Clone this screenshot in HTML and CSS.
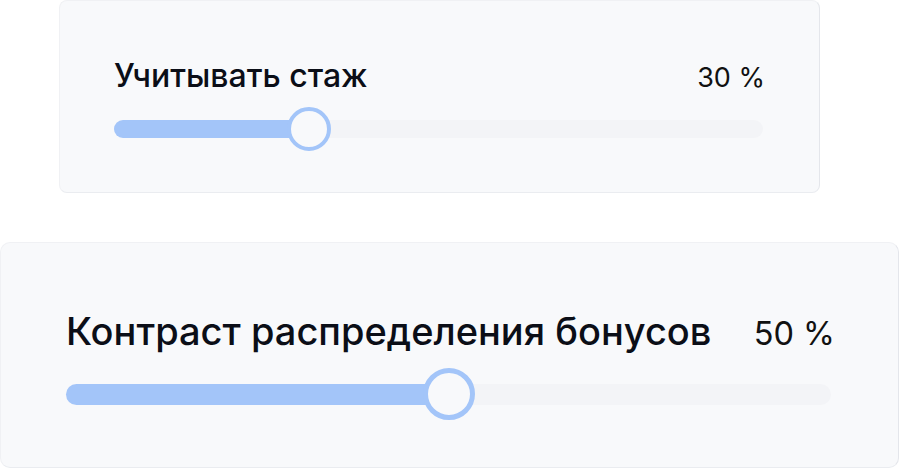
FILE: index.html
```html
<!DOCTYPE html>
<html lang="ru">
<head>
  <meta charset="UTF-8">
  <title>Настройки премий</title>
  <link rel="stylesheet" href="styles.css">
</head>
<body>
  <div class="list">
    <div class="card">
      <div class="head">
        <span class="label">Учитывать стаж</span>
        <span class="value">30 %</span>
      </div>
      <div class="track">
        <div class="fill" style="width: 30%"></div>
        <div class="thumb" style="left: 30%"></div>
      </div>
    </div>

    <div class="card active">
      <div class="head">
        <span class="label">Контраст распределения бонусов</span>
        <span class="value">50 %</span>
      </div>
      <div class="track">
        <div class="fill" style="width: 50%"></div>
        <div class="thumb" style="left: 50%"></div>
      </div>
    </div>
  </div>
</body>
</html>
```

FILE: styles.css
```css
* {
  box-sizing: border-box;
}
body {
  margin: 0;
  background: #fff;
  font-family: Inter, "Noto Sans", sans-serif;
  color: #0b0e17;
}
.list {
  display: flex;
  flex-direction: column;
  align-items: flex-start;
}

/* карточка слайдера */
.card {
  width: 761px;
  height: 193px;
  margin-left: 59px;
  padding: 56px 56px 0 54px;
  background: #f8f9fb;
  border: 1px solid #f0f1f4;
  border-right-color: #e4e6eb;
  border-bottom-color: #eaecf0;
  border-radius: 8px;
}
.head {
  display: flex;
  justify-content: space-between;
  align-items: baseline;
}
.label {
  font-size: 32px;
  font-weight: 500;
  line-height: 1.21;
}
.value {
  font-size: 27px;
  font-weight: 400;
  line-height: 1.21;
  color: #111;
  margin-right: -2px;
}
.track {
  position: relative;
  height: 18px;
  margin-top: 24px;
  border-radius: 9px;
  background: #f3f4f7;
}
.fill {
  height: 100%;
  border-radius: 9px;
  background: #a3c5f9;
}
.thumb {
  position: absolute;
  top: 50%;
  width: 44px;
  height: 44px;
  border: 4px solid #a3c5f9;
  border-radius: 50%;
  background: #f8f9fb;
  transform: translate(-50%, -50%);
}

/* активная карточка крупнее */
.card.active {
  width: 899px;
  height: 226px;
  margin-top: 49px;
  margin-left: 0;
  padding: 66px 67px 0 65px;
  border-radius: 10px;
}
.card.active .label {
  font-size: 38px;
}
.card.active .value {
  font-size: 32.5px;
  margin-right: -4px;
}
.card.active .track {
  height: 21px;
  margin-top: 29px;
  border-radius: 11px;
}
.card.active .fill {
  border-radius: 11px;
}
.card.active .thumb {
  width: 52px;
  height: 52px;
  border-width: 5px;
}
```
